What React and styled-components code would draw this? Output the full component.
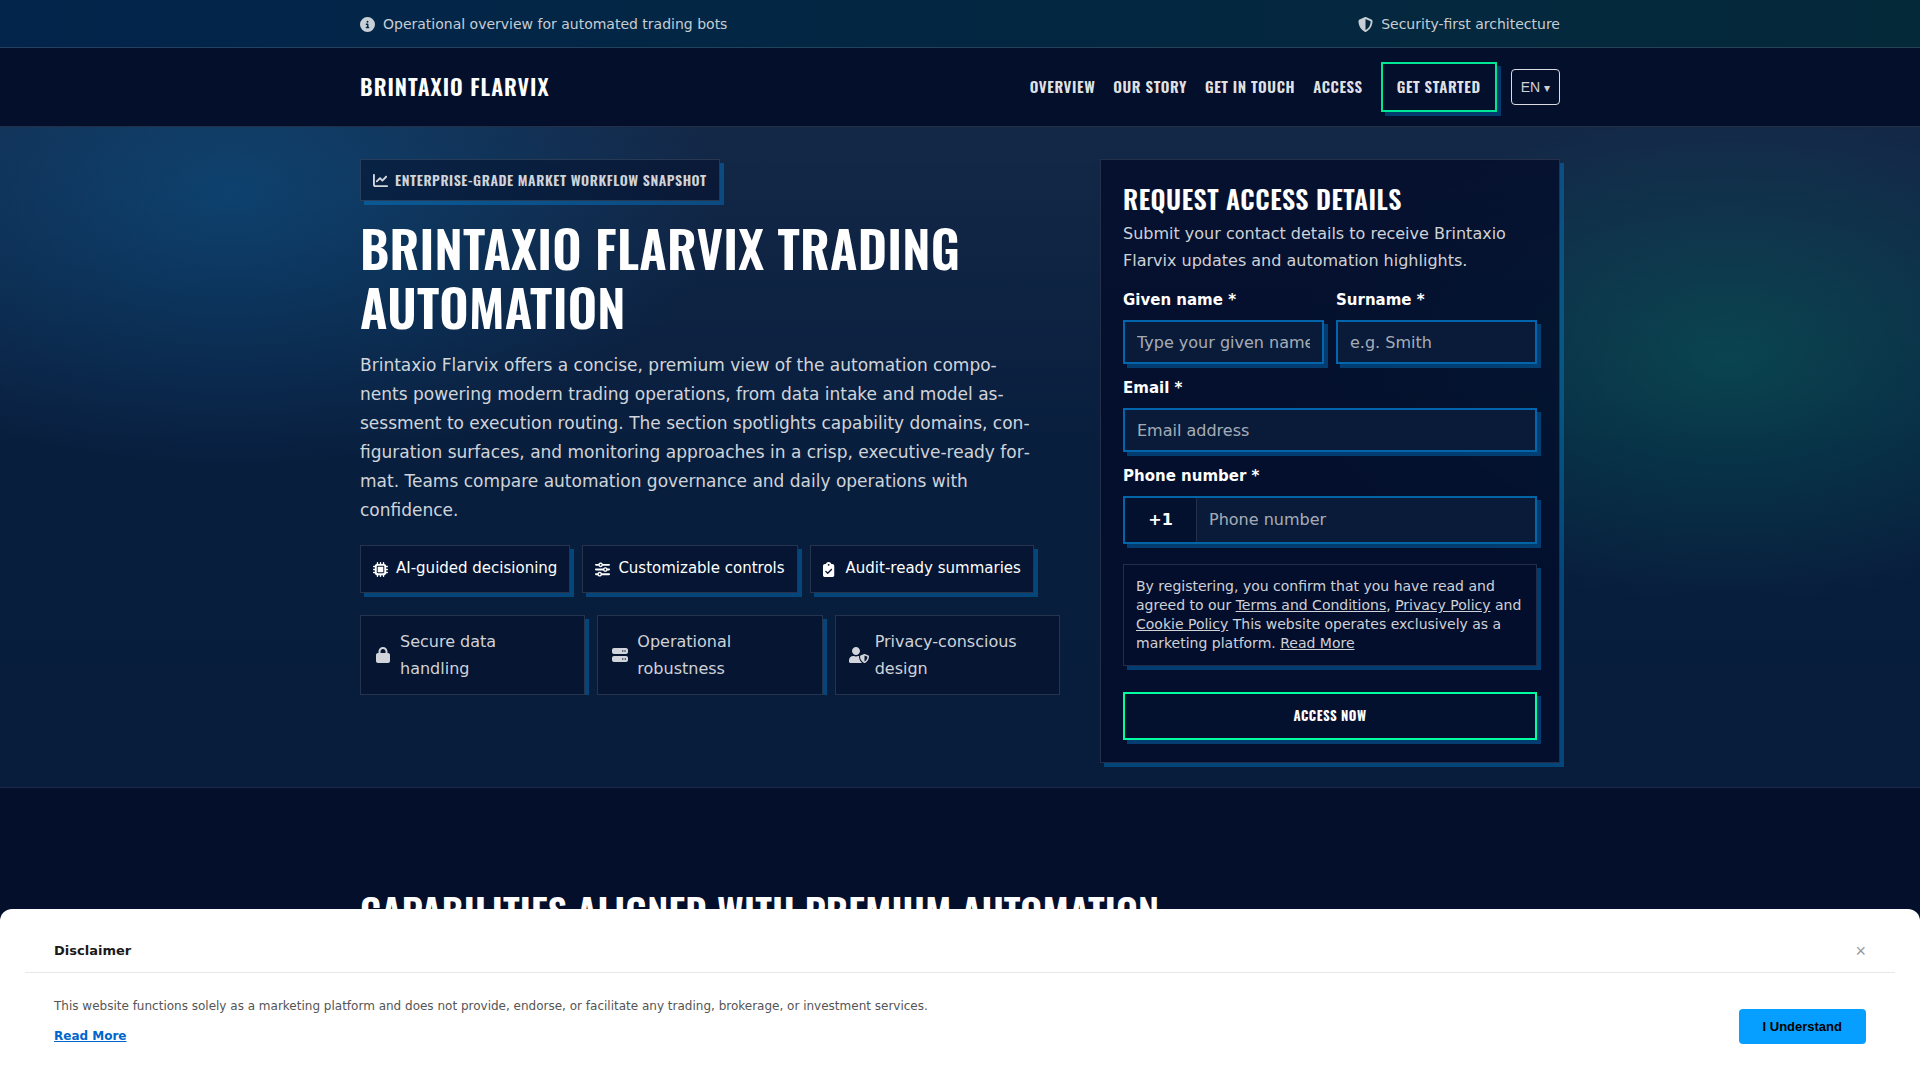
import React from 'react';
import styled, { createGlobalStyle } from 'styled-components';
import { FaUserShield } from 'react-icons/fa';
import {
  FaChartLine,
  FaCircleInfo,
  FaClipboardCheck,
  FaLock,
  FaMicrochip,
  FaServer,
  FaShieldHalved,
  FaSliders,
} from 'react-icons/fa6';

const NAV_LINKS = ['Overview', 'Our Story', 'Get in Touch', 'Access'];

const CHIPS = [
  { icon: FaMicrochip, label: 'AI-guided decisioning' },
  { icon: FaSliders, label: 'Customizable controls' },
  { icon: FaClipboardCheck, label: 'Audit-ready summaries' },
];

const TRUST_ITEMS = [
  { icon: FaLock, label: 'Secure data handling' },
  { icon: FaServer, label: 'Operational robustness' },
  { icon: FaUserShield, label: 'Privacy-conscious design', wide: true },
];

const TopBar = () => (
  <TopBarContainer>
    <TopBarContent>
      <TopBarItem>
        <FaCircleInfo />
        Operational overview for automated trading bots
      </TopBarItem>
      <TopBarItem>
        <FaShieldHalved />
        Security-first architecture
      </TopBarItem>
    </TopBarContent>
  </TopBarContainer>
);

const Header = () => (
  <HeaderContainer>
    <HeaderContent>
      <Brand href="#">Brintaxio Flarvix</Brand>
      <Nav>
        {NAV_LINKS.map((label) => (
          <NavLink key={label} href="#">{label}</NavLink>
        ))}
        <NavCta href="#">Get Started</NavCta>
        <LangButton type="button">
          EN <Caret>▾</Caret>
        </LangButton>
      </Nav>
    </HeaderContent>
  </HeaderContainer>
);

const HeroCopy = () => (
  <div>
    <Badge>
      <FaChartLine />
      Enterprise-grade market workflow snapshot
    </Badge>
    <HeroTitle>Brintaxio Flarvix Trading Automation</HeroTitle>
    <HeroText>
      Brintaxio Flarvix offers a concise, premium view of the automation compo&shy;nents
      powering modern trading operations, from data intake and model as&shy;sessment to
      execution routing. The section spotlights capability domains, con&shy;figuration
      surfaces, and monitoring approaches in a crisp, executive-ready for&shy;mat. Teams
      compare automation governance and daily operations with confidence.
    </HeroText>
    <ChipRow>
      {CHIPS.map(({ icon: Icon, label }) => (
        <Chip key={label}>
          <ChipIcon><Icon preserveAspectRatio="xMinYMid" /></ChipIcon>
          {label}
        </Chip>
      ))}
    </ChipRow>
    <TrustGrid>
      {TRUST_ITEMS.map(({ icon: Icon, label, wide }) => (
        <TrustCard key={label}>
          <TrustIcon $wide={wide}><Icon /></TrustIcon>
          <span>{label}</span>
        </TrustCard>
      ))}
    </TrustGrid>
  </div>
);

const AccessForm = () => (
  <FormCard onSubmit={(e) => e.preventDefault()}>
    <FormTitle>Request access details</FormTitle>
    <FormIntro>
      Submit your contact details to receive Brintaxio Flarvix updates and automation highlights.
    </FormIntro>
    <Fields>
      <FieldRow>
        <Field>
          <Label htmlFor="given-name">Given name *</Label>
          <Input id="given-name" type="text" placeholder="Type your given name" />
        </Field>
        <Field>
          <Label htmlFor="surname">Surname *</Label>
          <Input id="surname" type="text" placeholder="e.g. Smith" />
        </Field>
      </FieldRow>
      <Field>
        <Label htmlFor="email">Email *</Label>
        <Input id="email" type="email" placeholder="Email address" />
      </Field>
      <Field>
        <Label htmlFor="phone">Phone number *</Label>
        <PhoneGroup>
          <PhonePrefix>+1</PhonePrefix>
          <PhoneInput id="phone" type="tel" placeholder="Phone number" />
        </PhoneGroup>
      </Field>
    </Fields>
    <Legal>
      By registering, you confirm that you have read and agreed to our{' '}
      <a href="#">Terms and Conditions</a>, <a href="#">Privacy Policy</a> and{' '}
      <a href="#">Cookie Policy</a> This website operates exclusively as a marketing
      platform. <a href="#">Read More</a>
    </Legal>
    <SubmitButton type="submit">Access now</SubmitButton>
  </FormCard>
);

const Disclaimer = () => (
  <Sheet role="dialog" aria-labelledby="disclaimer-title">
    <SheetHeader>
      <SheetTitle id="disclaimer-title">Disclaimer</SheetTitle>
      <CloseButton type="button" aria-label="Close">×</CloseButton>
    </SheetHeader>
    <SheetBody>
      <div>
        <SheetText>
          This website functions solely as a marketing platform and does not provide, endorse,
          or facilitate any trading, brokerage, or investment services.
        </SheetText>
        <SheetLink href="#">Read More</SheetLink>
      </div>
      <AcceptButton type="button">I Understand</AcceptButton>
    </SheetBody>
  </Sheet>
);

const App = () => (
  <>
    <GlobalStyle />
    <TopBar />
    <Header />
    <main>
      <Hero>
        <HeroGrid>
          <HeroCopy />
          <AccessForm />
        </HeroGrid>
      </Hero>
      <Section>
        <Container>
          <SectionTitle>Capabilities aligned with premium automation</SectionTitle>
        </Container>
      </Section>
    </main>
    <Disclaimer />
  </>
);

const GlobalStyle = createGlobalStyle`
  :root {
    --navy: #040f2c;
    --panel: rgba(4, 14, 42, 0.54);
    --line: rgba(255, 255, 255, 0.13);
    --muted: rgba(255, 255, 255, 0.82);
    --green: #00ffa3;
    --hard-shadow: 4px 4px 0 rgba(0, 157, 255, 0.32);
    --heading: Oswald, 'Roboto Condensed', sans-serif;
  }

  * {
    box-sizing: border-box;
  }

  html {
    overflow: hidden;
  }

  body {
    margin: 0;
    background: var(--navy);
    color: #fff;
    font-family: 'DejaVu Sans', sans-serif;
    font-size: 16px;
    line-height: 27px;
  }
`;

const Container = styled.div`
  width: 100%;
  max-width: 1240px;
  margin: 0 auto;
  padding: 0 20px;
`;

const TopBarContainer = styled.div`
  background: linear-gradient(90deg, rgba(0, 157, 255, 0.15), rgba(0, 255, 163, 0.11));
  border-bottom: 1px solid var(--line);
`;

const TopBarContent = styled(Container)`
  display: flex;
  justify-content: space-between;
  padding-top: 12px;
  padding-bottom: 11px;
`;

const TopBarItem = styled.span`
  display: flex;
  align-items: center;
  gap: 8px;
  color: rgba(255, 255, 255, 0.78);
  font-size: 14px;
  line-height: 24px;

  svg {
    width: 15px;
    height: 15px;
  }
`;

const HeaderContainer = styled.header`
  border-bottom: 1px solid var(--line);
`;

const HeaderContent = styled(Container)`
  display: flex;
  align-items: center;
  justify-content: space-between;
  padding-top: 14px;
  padding-bottom: 14px;
`;

const Brand = styled.a`
  padding-bottom: 2px;
  color: #fff;
  font-family: var(--heading);
  font-size: 22px;
  font-weight: 600;
  letter-spacing: 1px;
  text-decoration: none;
  text-transform: uppercase;
`;

const Nav = styled.nav`
  display: flex;
  align-items: center;
  gap: 18px;
`;

const NavLink = styled.a`
  padding-bottom: 2px;
  color: rgba(255, 255, 255, 0.9);
  font-family: var(--heading);
  font-size: 15px;
  font-weight: 600;
  letter-spacing: 0.04em;
  text-decoration: none;
  text-transform: uppercase;
`;

const NavCta = styled(NavLink)`
  padding: 9px 14px 11px;
  border: 2px solid #00e695;
  box-shadow: var(--hard-shadow);
  line-height: 26px;
`;

const LangButton = styled.button`
  height: 36px;
  margin-left: -4px;
  padding: 0 9px;
  background: transparent;
  border: 1px solid rgba(255, 255, 255, 0.85);
  border-radius: 4px;
  color: rgba(255, 255, 255, 0.82);
  font-family: 'Liberation Sans', sans-serif;
  font-size: 14px;
`;

const Caret = styled.span`
  font-size: 12px;
`;

const Hero = styled.section`
  padding: 32px 0 24px;
  border-bottom: 1px solid #1d2846;
  background:
    radial-gradient(900px 500px at 12% 10%, rgba(0, 163, 255, 0.22), transparent 55%),
    radial-gradient(800px 450px at 90% 35%, rgba(0, 255, 163, 0.16), transparent 55%),
    linear-gradient(180deg, rgba(255, 255, 255, 0.04), transparent 50%),
    linear-gradient(180deg, #0a1f40, #071d3b);
`;

const HeroGrid = styled(Container)`
  display: grid;
  grid-template-columns: minmax(0, 1fr) 460px;
  gap: 40px;
  align-items: start;
`;

const Badge = styled.div`
  display: flex;
  align-items: center;
  gap: 7px;
  width: fit-content;
  padding: 8px 12px;
  background: var(--panel);
  border: 1px solid var(--line);
  box-shadow: var(--hard-shadow);
  color: var(--muted);
  font-family: var(--heading);
  font-size: 14px;
  font-weight: 600;
  letter-spacing: 0.04em;
  line-height: 24px;
  text-transform: uppercase;

  svg {
    width: 15px;
    height: 15px;
  }
`;

const HeroTitle = styled.h1`
  margin: 17px 0 15px;
  font-family: var(--heading);
  font-size: 51px;
  font-weight: 600;
  letter-spacing: 0.005em;
  line-height: 59px;
  text-transform: uppercase;
`;

const HeroText = styled.p`
  max-width: 672px;
  margin: 0 0 20px;
  color: var(--muted);
  font-size: 17px;
  line-height: 29px;
`;

const ChipRow = styled.div`
  display: flex;
  flex-wrap: wrap;
  gap: 12px;
`;

const Chip = styled.div`
  display: flex;
  gap: 8px;
  padding: 8px 12px;
  background: var(--panel);
  border: 1px solid var(--line);
  box-shadow: var(--hard-shadow);
  font-size: 15px;
  line-height: 28px;
`;

const ChipIcon = styled.span`
  display: flex;
  align-items: center;
  height: 30px;

  svg {
    width: 15px;
    height: 15px;
  }
`;

const TrustGrid = styled.div`
  display: grid;
  grid-template-columns: repeat(3, minmax(0, 1fr));
  gap: 12px;
  margin-top: 22px;
  overflow: hidden;
`;

const TrustCard = styled.div`
  display: flex;
  align-items: center;
  gap: 8px;
  padding: 12px 20px 12px 13px;
  background: var(--panel);
  border: 1px solid var(--line);
  box-shadow: var(--hard-shadow);
  color: var(--muted);
`;

const TrustIcon = styled.span`
  display: flex;
  flex: none;
  justify-content: safe center;
  width: 18px;

  svg {
    flex: none;
    width: ${props => props.$wide ? '20px' : '16px'};
    height: 16px;
  }
`;

const FormCard = styled.form`
  padding: 22px;
  background: rgba(3, 12, 41, 0.78);
  border: 1px solid var(--line);
  box-shadow: var(--hard-shadow);
`;

const FormTitle = styled.h2`
  margin: 0 0 4px;
  font-family: var(--heading);
  font-size: 26px;
  font-weight: 600;
  letter-spacing: 0.02em;
  line-height: 34px;
  text-transform: uppercase;
`;

const FormIntro = styled.p`
  margin: 0 0 12px;
  color: var(--muted);
`;

const Fields = styled.div`
  display: grid;
  gap: 10px;
`;

const FieldRow = styled.div`
  display: grid;
  grid-template-columns: repeat(2, minmax(0, 1fr));
  gap: 12px;
`;

const Field = styled.div`
  display: grid;
  gap: 6px;
`;

const Label = styled.label`
  font-size: 15px;
  font-weight: 700;
  line-height: 28px;
`;

const Input = styled.input`
  width: 100%;
  height: 44px;
  padding: 0 12px;
  background: #091b39;
  border: 2px solid rgba(0, 157, 255, 0.58);
  border-radius: 0;
  box-shadow: var(--hard-shadow);
  color: #fff;
  font-family: inherit;
  font-size: 16px;
  outline: none;

  &::placeholder {
    color: rgba(255, 255, 255, 0.65);
  }
`;

const PhoneGroup = styled.div`
  display: flex;
  height: 48px;
  background: #091b39;
  border: 2px solid #0465a6;
  box-shadow: var(--hard-shadow);
`;

const PhonePrefix = styled.span`
  display: flex;
  align-items: center;
  justify-content: center;
  width: 72px;
  padding-bottom: 2px;
  background: #04112e;
  border-right: 1px solid var(--line);
  font-weight: 700;
`;

const PhoneInput = styled(Input)`
  flex: 1;
  width: auto;
  height: auto;
  padding-bottom: 2px;
  background: transparent;
  border: 0;
  box-shadow: none;
`;

const Legal = styled.p`
  margin: 20px 0 26px;
  padding: 12px;
  background: rgba(3, 14, 44, 0.6);
  border: 1px solid var(--line);
  box-shadow: var(--hard-shadow);
  color: var(--muted);
  font-size: 14px;
  line-height: 19px;

  a {
    color: inherit;
  }
`;

const SubmitButton = styled.button`
  display: block;
  width: 100%;
  height: 48px;
  padding: 0 0 2px;
  background: #04112e;
  border: 2px solid var(--green);
  box-shadow: var(--hard-shadow);
  color: #fff;
  font-family: var(--heading);
  font-size: 13px;
  font-weight: 700;
  letter-spacing: 0.04em;
  text-transform: uppercase;
`;

const Section = styled.section`
  padding: 96px 0;
`;

const SectionTitle = styled.h2`
  margin: 0;
  font-family: var(--heading);
  font-size: 38px;
  font-weight: 600;
  letter-spacing: 0.005em;
  line-height: 52px;
  text-transform: uppercase;
`;

const Sheet = styled.div`
  position: fixed;
  right: 0;
  bottom: 0;
  left: 0;
  padding: 28px 25px 34px;
  background: #fff;
  border-radius: 12px 12px 0 0;
  color: #555;
`;

const SheetHeader = styled.div`
  display: flex;
  align-items: center;
  justify-content: space-between;
  padding: 0 29px 8px;
  border-bottom: 1px solid #e8e8e8;
`;

const SheetTitle = styled.h3`
  margin: 0;
  color: #1a1a1a;
  font-size: 13px;
  line-height: 27px;
`;

const CloseButton = styled.button`
  padding: 0;
  background: none;
  border: 0;
  color: #999;
  font-family: 'Liberation Sans', sans-serif;
  font-size: 18px;
  line-height: 24px;
`;

const SheetBody = styled.div`
  display: flex;
  align-items: flex-end;
  justify-content: space-between;
  padding: 23px 29px 0;
`;

const SheetText = styled.p`
  margin: 0 0 10px;
  font-size: 12px;
  line-height: 20px;
`;

const SheetLink = styled.a`
  display: block;
  color: #0066cc;
  font-size: 12px;
  font-weight: 700;
  line-height: 20px;
`;

const AcceptButton = styled.button`
  height: 35px;
  margin-bottom: 2px;
  padding: 0 24px;
  background: #069eff;
  border: 0;
  border-radius: 4px;
  color: #000;
  font-family: 'Liberation Sans', sans-serif;
  font-size: 13px;
  font-weight: 700;
`;

export default App;
